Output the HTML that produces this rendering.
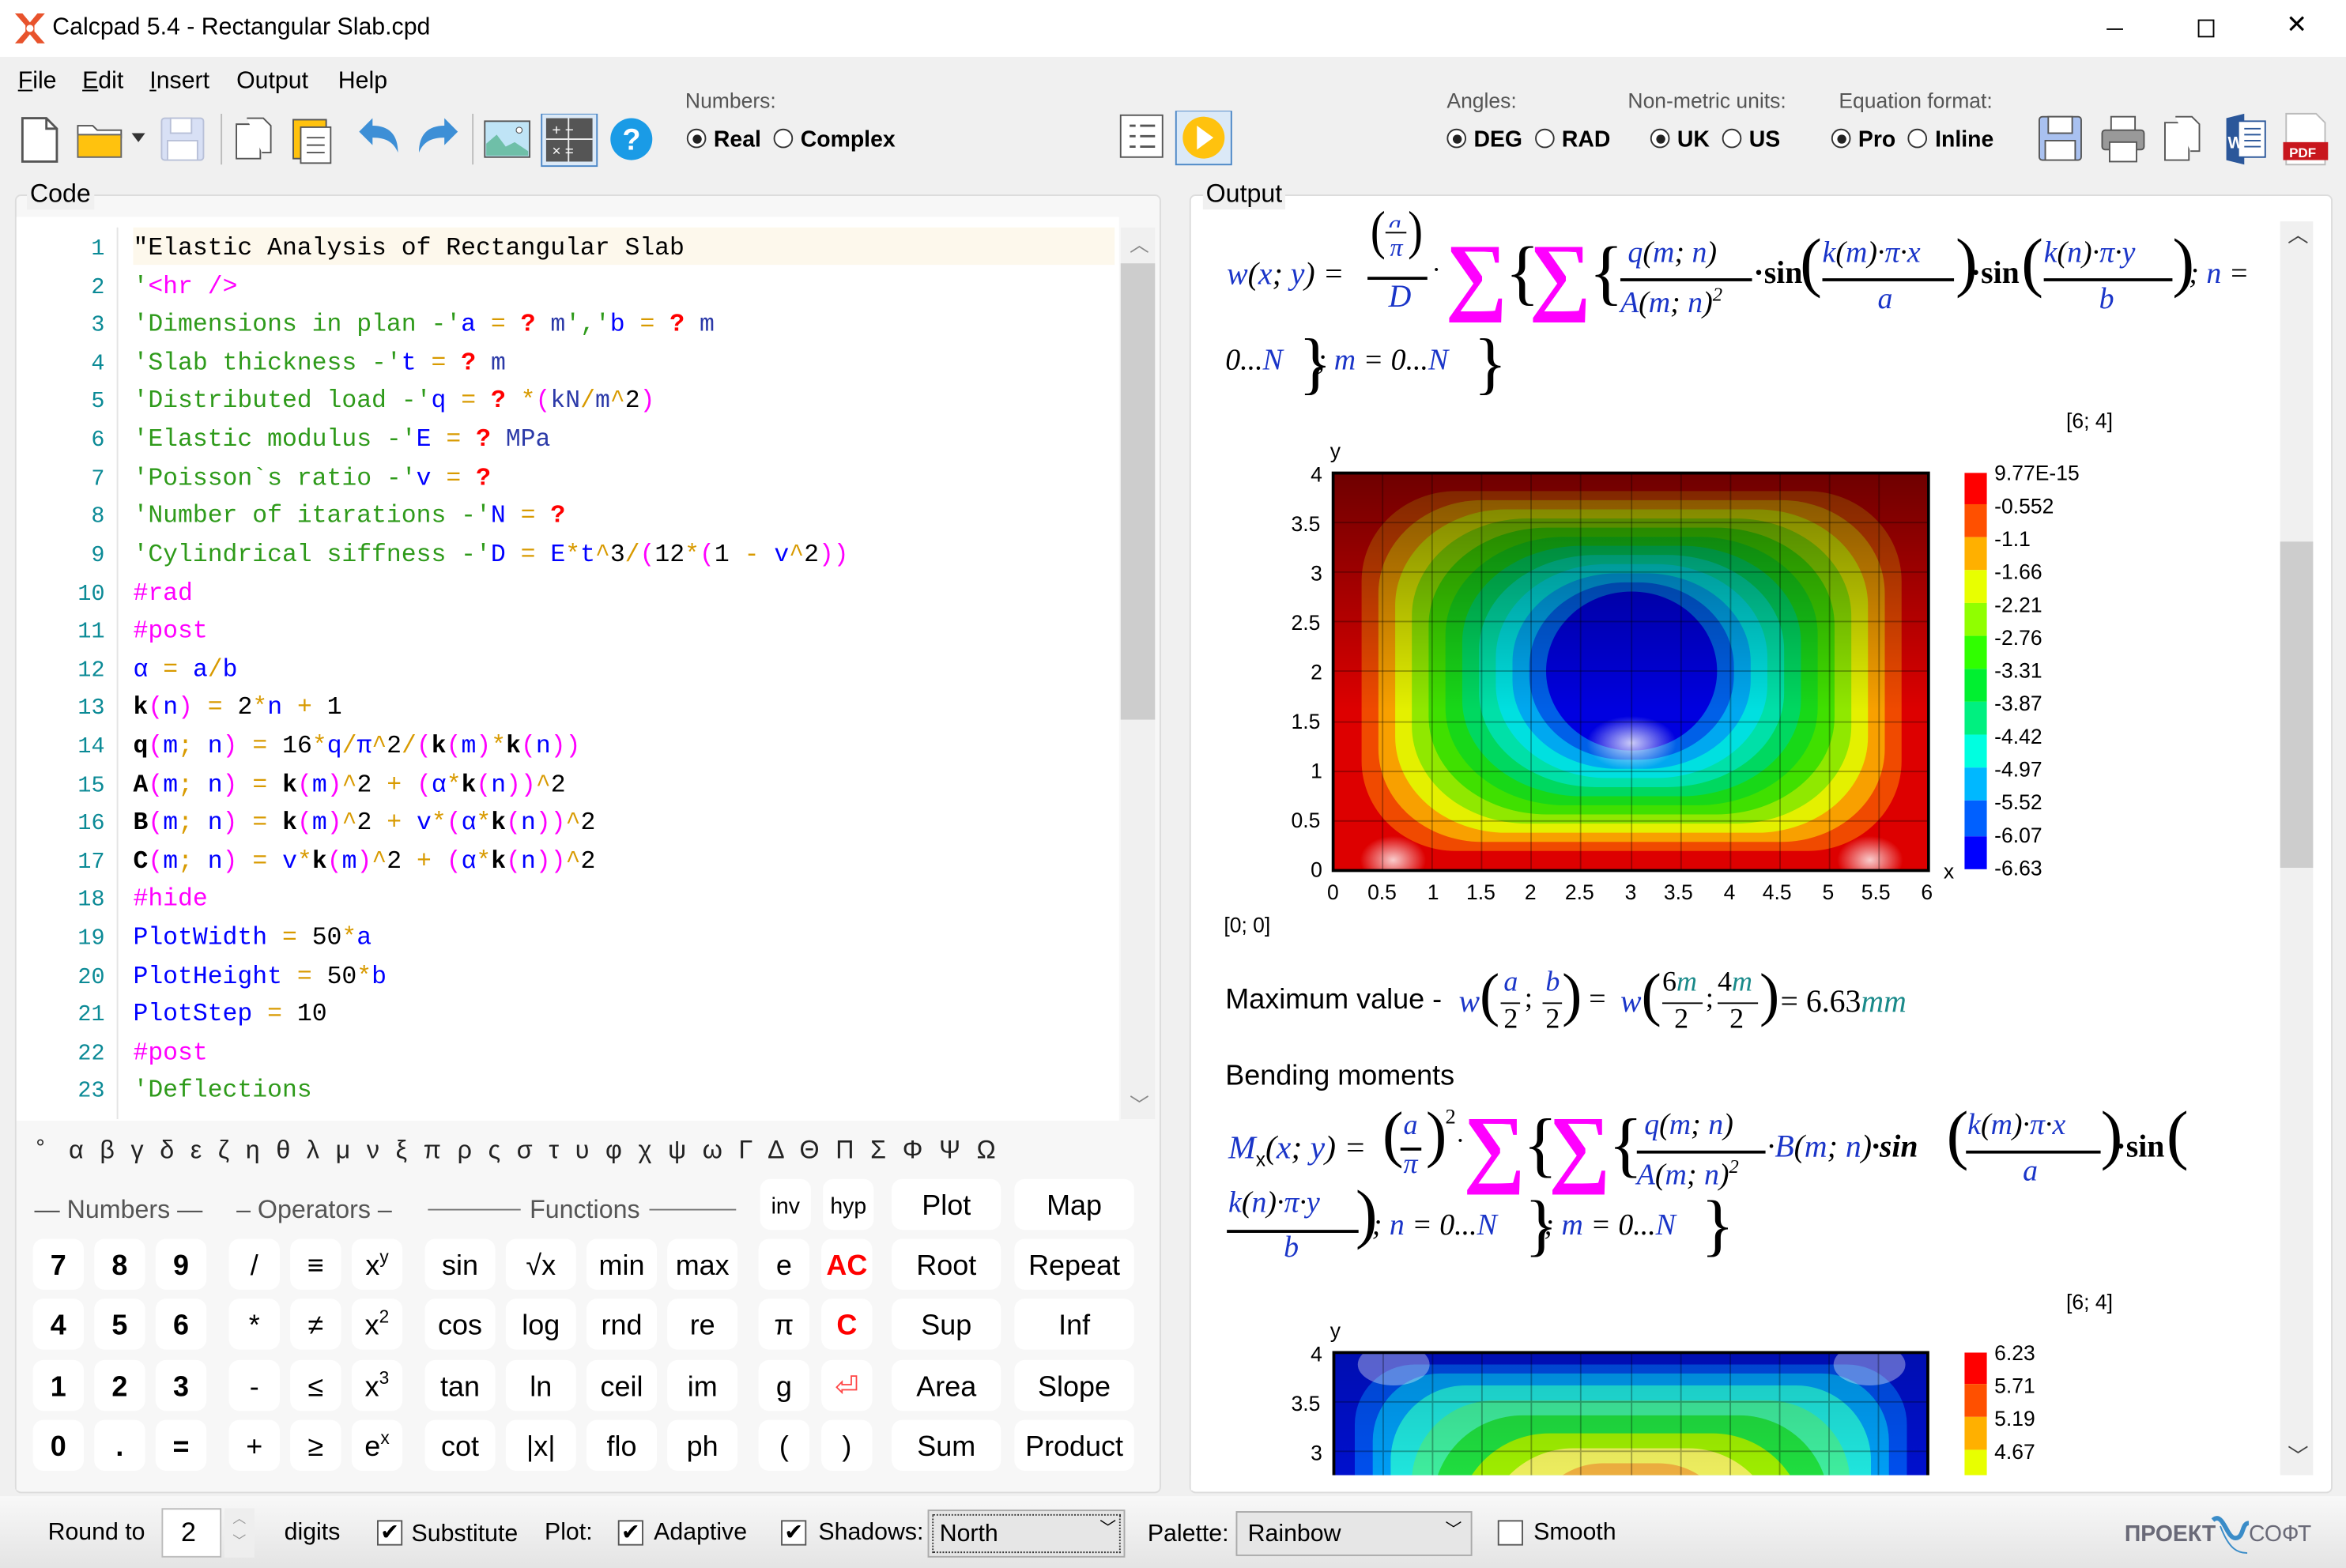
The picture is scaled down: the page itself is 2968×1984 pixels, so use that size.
<!DOCTYPE html>
<html><head><meta charset="utf-8">
<style>
html,body{margin:0;padding:0;width:2968px;height:1984px;overflow:hidden;background:#f0f0f0}
#w{position:absolute;left:0;top:0;width:1568px;height:1048px;transform:scale(1.89286,1.89313);transform-origin:0 0;background:#f0f0f0;font-family:"Liberation Sans",sans-serif;color:#000;overflow:hidden}
.a{position:absolute;white-space:nowrap}
.ui{font-size:16px}
.sm{font-size:14px;color:#555}
.rad{display:inline-block;width:11px;height:11px;border:1px solid #333;border-radius:50%;background:#fff;vertical-align:-1px;margin-right:5px;position:relative}
.rad.on::after{content:"";position:absolute;left:2.5px;top:2.5px;width:6px;height:6px;border-radius:50%;background:#222}
.bold{font-weight:bold;font-size:15px}
.panel{position:absolute;background:#fff;border:1px solid #dcdcdc;border-radius:4px}
.code{font-family:"Liberation Mono",monospace;font-size:16.6px}
.ln{position:absolute;left:30px;width:40px;text-align:right;color:#0b8a96;font-family:"Liberation Mono",monospace;font-size:15px}
.cl{position:absolute;left:89px}
.g{color:#2e9a1a}.b{color:#0000ff}.o{color:#d89a00}.r{color:#ff0000;font-weight:bold}.p{color:#ff00ff}.k{color:#000}.u{color:#2c3aa8}
.btn{position:absolute;background:#fff;border-radius:7px;text-align:center;font-size:19px;line-height:37px;height:34px}
.sp{position:relative;top:-8px;font-size:12px;line-height:0}
.v{font-family:"Liberation Serif",serif;font-style:italic;color:#1a35c8}
.n{font-family:"Liberation Serif",serif;color:#000}
.chk{position:absolute;width:15px;height:15px;border:1px solid #555;background:#fff;font-size:15px;line-height:15px;text-align:center}
.tk{position:absolute;font-size:14px;color:#000}
</style></head><body><div id="w">

<div class="a" style="left:0;top:0;width:1568px;height:38px;background:#fff"></div>
<svg class="a" style="left:9px;top:8px" width="22" height="22" viewBox="0 0 22 22"><path d="M1 1 L8 9 L8 13 L1 21 L6 21 L11 15 L16 21 L21 21 L14 13 L14 9 L21 1 L16 1 L11 7 L6 1Z" fill="#e8532c"/><circle cx="11" cy="11" r="2.4" fill="#fff"/></svg>
<div class="a ui" style="left:35px;top:10px">Calcpad 5.4 - Rectangular Slab.cpd</div>
<div class="a" style="left:1408px;top:19px;width:11px;height:1px;background:#000"></div>
<div class="a" style="left:1469px;top:13px;width:9px;height:10px;border:1px solid #000"></div>
<div class="a" style="left:1528px;top:7px;font-size:17px">✕</div>

<div class="a ui" style="left:12px;top:46px"><u>F</u>ile</div>
<div class="a ui" style="left:55px;top:46px"><u>E</u>dit</div>
<div class="a ui" style="left:100px;top:46px"><u>I</u>nsert</div>
<div class="a ui" style="left:158px;top:46px">Output</div>
<div class="a ui" style="left:226px;top:46px">Help</div>

<svg class="a" style="left:12px;top:76px" width="440" height="36" viewBox="0 0 440 36">
 <path d="M3 3h16l7 7v22H3z" fill="#fff" stroke="#555" stroke-width="1.5"/><path d="M19 3v7h7" fill="none" stroke="#555" stroke-width="1.5"/>
 <path d="M40 8h10l3 3h16v5H40z" fill="#fff" stroke="#555"/><path d="M40 14h29v15H40z" fill="#ffc20e" stroke="#666"/>
 <path d="M76 13h9l-4.5 6z" fill="#333"/>
 <rect x="96" y="3" width="28" height="28" rx="2" fill="#d8e0f5" stroke="#b8c0d8"/><rect x="102" y="3" width="14" height="10" fill="#fff" stroke="#b8c0d8"/><rect x="100" y="18" width="20" height="13" fill="#fff" stroke="#b8c0d8"/>
 <line x1="136" y1="0" x2="136" y2="34" stroke="#bbb"/>
 <path d="M146 7h11l5 5v18h-16z" fill="#fff" stroke="#555"/><path d="M153 3h11l5 5v18h-6" fill="#fff" stroke="#555"/>
 <rect x="184" y="4" width="22" height="26" fill="#ffc20e" stroke="#555"/><rect x="189" y="9" width="20" height="24" fill="#fff" stroke="#555"/><path d="M193 16h12M193 21h12M193 26h12" stroke="#555"/>
 <path d="M228 12 L237 3 L237 8 C248 8 254 14 254 26 C251 19 246 16 237 16 L237 21Z" fill="#3d8fd6"/>
 <path d="M294 12 L285 3 L285 8 C274 8 268 14 268 26 C271 19 276 16 285 16 L285 21Z" fill="#3d8fd6"/>
 <line x1="304" y1="0" x2="304" y2="34" stroke="#bbb"/>
 <rect x="312" y="5" width="30" height="24" fill="#bfe4f6" stroke="#555"/><path d="M313 28 L313 20 L320 14 L326 22 L332 19 L341 25 L341 28Z" fill="#6fbfa8"/><circle cx="335" cy="11" r="2" fill="#fff" stroke="#555" stroke-width=".6"/>
 <rect x="350" y="0" width="37" height="35" fill="#dbe9f7" stroke="#4a86c6"/><rect x="353" y="3" width="31" height="29" fill="#555"/><path d="M368 3v29M353 17h31" stroke="#eee"/><text x="357" y="14" fill="#fff" font-size="10">+ −</text><text x="357" y="28" fill="#fff" font-size="10">× =</text>
 <circle cx="410" cy="17" r="14" fill="#1a9be6"/><text x="404" y="24" fill="#fff" font-size="20" font-weight="bold" font-family="Liberation Sans">?</text>
</svg>
<div class="a sm" style="left:458px;top:59px">Numbers:</div>
<div class="a bold" style="left:459px;top:85px"><span class="rad on"></span>Real&nbsp;&nbsp;<span class="rad"></span>Complex</div>
<svg class="a" style="left:747px;top:74px" width="80" height="38" viewBox="0 0 80 38">
 <rect x="2" y="3" width="28" height="28" fill="#fff" stroke="#555"/><path d="M8 10h4M15 10h10M8 17h4M15 17h10M8 24h4M15 24h10" stroke="#555" stroke-width="1.5"/>
 <rect x="39" y="0" width="37" height="36" fill="#dbe9f7" stroke="#4a86c6"/><circle cx="57.5" cy="18" r="14" fill="#ffc20e"/><path d="M53 10 L64 18 L53 26Z" fill="#fff"/>
</svg>
<div class="a sm" style="left:967px;top:59px">Angles:</div>
<div class="a bold" style="left:967px;top:85px"><span class="rad on"></span>DEG&nbsp;&nbsp;<span class="rad"></span>RAD</div>
<div class="a sm" style="left:1088px;top:59px">Non-metric units:</div>
<div class="a bold" style="left:1103px;top:85px"><span class="rad on"></span>UK&nbsp;&nbsp;<span class="rad"></span>US</div>
<div class="a sm" style="left:1229px;top:59px">Equation format:</div>
<div class="a bold" style="left:1224px;top:85px"><span class="rad on"></span>Pro&nbsp;&nbsp;<span class="rad"></span>Inline</div>
<svg class="a" style="left:1360px;top:75px" width="200" height="36" viewBox="0 0 200 36">
 <rect x="3" y="3" width="28" height="29" rx="2" fill="#a9c1f0" stroke="#555"/><rect x="9" y="3" width="16" height="11" fill="#fff" stroke="#555"/><rect x="7" y="19" width="20" height="13" fill="#fff" stroke="#555"/>
 <rect x="51" y="3" width="16" height="10" fill="#fff" stroke="#555"/><rect x="45" y="12" width="28" height="13" rx="2" fill="#999" stroke="#555"/><rect x="50" y="20" width="18" height="13" fill="#fff" stroke="#555"/>
 <path d="M87 7h11l5 5v20h-16z" fill="#fff" stroke="#555"/><path d="M94 3h11l5 5v18h-6" fill="#fff" stroke="#555"/>
 <path d="M128 4 L140 1 L140 35 L128 32Z" fill="#2b579a"/><rect x="136" y="6" width="18" height="24" fill="#fff" stroke="#2b579a"/><path d="M140 11h11M140 15h11M140 19h11M140 23h11" stroke="#2b579a"/><text x="129" y="24" fill="#fff" font-size="11" font-weight="bold">W</text>
 <path d="M168 1h20l6 6v28h-26z" fill="#fff" stroke="#bbb"/><rect x="166" y="20" width="30" height="12" fill="#c8161d"/><text x="170" y="30" fill="#fff" font-size="9" font-weight="bold">PDF</text>
</svg>

<div class="panel" style="left:10px;top:130px;width:764px;height:866px;background:#f7f7f7"></div>
<div class="a" style="left:18px;top:120px;font-size:17px;background:#f0f0f0;padding:0 2px">Code</div>
<div class="a" style="left:11px;top:145px;width:737px;height:604px;background:#fff"></div>
<div class="a" style="left:78px;top:152px;width:1px;height:596px;background:#e4e4e4"></div>
<div class="a" style="left:89px;top:152px;width:656px;height:25px;background:#fdf8ec"></div>
<div class="a" style="left:749px;top:152px;width:23px;height:596px;background:#f0f0f0"></div>
<div class="a" style="left:749px;top:176px;width:23px;height:305px;background:#cdcdcd"></div>
<div class="a" style="left:755px;top:153px;font-size:13px;color:#888">︿</div>
<div class="a" style="left:755px;top:728px;font-size:13px;color:#888">﹀</div>

<div style="position:absolute;left:0;top:3px;width:760px;height:600px">
<div class="ln" style="top:155px">1</div><div class="cl code" style="top:153px">"Elastic Analysis of Rectangular Slab</div>
<div class="ln" style="top:181px">2</div><div class="cl code g" style="top:179px">'<span class="p">&lt;hr /&gt;</span></div>
<div class="ln" style="top:206px">3</div><div class="cl code g" style="top:204px">'Dimensions in plan -'<span class="b">a</span> <span class="o">=</span> <span class="r">?</span> <span class="u">m</span>','<span class="b">b</span> <span class="o">=</span> <span class="r">?</span> <span class="u">m</span></div>
<div class="ln" style="top:232px">4</div><div class="cl code g" style="top:230px">'Slab thickness -'<span class="b">t</span> <span class="o">=</span> <span class="r">?</span> <span class="u">m</span></div>
<div class="ln" style="top:257px">5</div><div class="cl code g" style="top:255px">'Distributed load -'<span class="b">q</span> <span class="o">=</span> <span class="r">?</span> <span class="o">*</span><span class="p">(</span><span class="u">kN</span><span class="o">/</span><span class="u">m</span><span class="o">^</span><span class="k">2</span><span class="p">)</span></div>
<div class="ln" style="top:283px">6</div><div class="cl code g" style="top:281px">'Elastic modulus -'<span class="b">E</span> <span class="o">=</span> <span class="r">?</span> <span class="u">MPa</span></div>
<div class="ln" style="top:309px">7</div><div class="cl code g" style="top:307px">'Poisson`s ratio -'<span class="b">v</span> <span class="o">=</span> <span class="r">?</span></div>
<div class="ln" style="top:334px">8</div><div class="cl code g" style="top:332px">'Number of itarations -'<span class="b">N</span> <span class="o">=</span> <span class="r">?</span></div>
<div class="ln" style="top:360px">9</div><div class="cl code g" style="top:358px">'Cylindrical siffness -'<span class="b">D</span> <span class="o">=</span> <span class="b">E</span><span class="o">*</span><span class="b">t</span><span class="o">^</span><span class="k">3</span><span class="o">/</span><span class="p">(</span><span class="k">12</span><span class="o">*</span><span class="p">(</span><span class="k">1</span> <span class="o">-</span> <span class="b">v</span><span class="o">^</span><span class="k">2</span><span class="p">))</span></div>
<div class="ln" style="top:386px">10</div><div class="cl code p" style="top:384px">#rad</div>
<div class="ln" style="top:411px">11</div><div class="cl code p" style="top:409px">#post</div>
<div class="ln" style="top:437px">12</div><div class="cl code" style="top:435px"><span class="b">α</span> <span class="o">=</span> <span class="b">a</span><span class="o">/</span><span class="b">b</span></div>
<div class="ln" style="top:462px">13</div><div class="cl code" style="top:460px"><b>k</b><span class="p">(</span><span class="b">n</span><span class="p">)</span> <span class="o">=</span> 2<span class="o">*</span><span class="b">n</span> <span class="o">+</span> 1</div>
<div class="ln" style="top:488px">14</div><div class="cl code" style="top:486px"><b>q</b><span class="p">(</span><span class="b">m</span><span class="o">;</span> <span class="b">n</span><span class="p">)</span> <span class="o">=</span> 16<span class="o">*</span><span class="b">q</span><span class="o">/</span><span class="b">π</span><span class="o">^</span>2<span class="o">/</span><span class="p">(</span><b>k</b><span class="p">(</span><span class="b">m</span><span class="p">)</span><span class="o">*</span><b>k</b><span class="p">(</span><span class="b">n</span><span class="p">))</span></div>
<div class="ln" style="top:514px">15</div><div class="cl code" style="top:512px"><b>A</b><span class="p">(</span><span class="b">m</span><span class="o">;</span> <span class="b">n</span><span class="p">)</span> <span class="o">=</span> <b>k</b><span class="p">(</span><span class="b">m</span><span class="p">)</span><span class="o">^</span>2 <span class="o">+</span> <span class="p">(</span><span class="b">α</span><span class="o">*</span><b>k</b><span class="p">(</span><span class="b">n</span><span class="p">))</span><span class="o">^</span>2</div>
<div class="ln" style="top:539px">16</div><div class="cl code" style="top:537px"><b>B</b><span class="p">(</span><span class="b">m</span><span class="o">;</span> <span class="b">n</span><span class="p">)</span> <span class="o">=</span> <b>k</b><span class="p">(</span><span class="b">m</span><span class="p">)</span><span class="o">^</span>2 <span class="o">+</span> <span class="b">v</span><span class="o">*</span><span class="p">(</span><span class="b">α</span><span class="o">*</span><b>k</b><span class="p">(</span><span class="b">n</span><span class="p">))</span><span class="o">^</span>2</div>
<div class="ln" style="top:565px">17</div><div class="cl code" style="top:563px"><b>C</b><span class="p">(</span><span class="b">m</span><span class="o">;</span> <span class="b">n</span><span class="p">)</span> <span class="o">=</span> <span class="b">v</span><span class="o">*</span><b>k</b><span class="p">(</span><span class="b">m</span><span class="p">)</span><span class="o">^</span>2 <span class="o">+</span> <span class="p">(</span><span class="b">α</span><span class="o">*</span><b>k</b><span class="p">(</span><span class="b">n</span><span class="p">))</span><span class="o">^</span>2</div>
<div class="ln" style="top:590px">18</div><div class="cl code p" style="top:588px">#hide</div>
<div class="ln" style="top:616px">19</div><div class="cl code" style="top:614px"><span class="b">PlotWidth</span> <span class="o">=</span> 50<span class="o">*</span><span class="b">a</span></div>
<div class="ln" style="top:642px">20</div><div class="cl code" style="top:640px"><span class="b">PlotHeight</span> <span class="o">=</span> 50<span class="o">*</span><span class="b">b</span></div>
<div class="ln" style="top:667px">21</div><div class="cl code" style="top:665px"><span class="b">PlotStep</span> <span class="o">=</span> 10</div>
<div class="ln" style="top:693px">22</div><div class="cl code p" style="top:691px">#post</div>
<div class="ln" style="top:718px">23</div><div class="cl code g" style="top:716px">'Deflections</div>
</div>
<div class="a" style="left:11px;top:749px;width:762px;height:247px;background:#f7f7f7"></div>

<div class="a" style="left:24px;top:759px;font-size:15px;color:#222">°</div>
<div class="a" style="left:46px;top:759px;font-size:17px;color:#222;word-spacing:6.2px">α β γ δ ε ζ η θ λ μ ν ξ π ρ ς σ τ υ φ χ ψ ω Γ Δ Θ Π Σ Φ Ψ Ω</div>

<div class="a" style="left:23px;top:799px;font-size:17px;color:#555">— Numbers —</div>
<div class="a" style="left:158px;top:799px;font-size:17px;color:#555">– Operators –</div>
<div class="a" style="left:286px;top:808px;width:62px;height:1px;background:#777"></div>
<div class="a" style="left:354px;top:799px;font-size:17px;color:#555">Functions</div>
<div class="a" style="left:434px;top:808px;width:58px;height:1px;background:#777"></div>

<div class="btn" style="left:508px;top:788px;width:34px;font-size:15px">inv</div>
<div class="btn" style="left:550px;top:788px;width:34px;font-size:15px">hyp</div>
<div class="btn" style="left:596px;top:788px;width:73px">Plot</div>
<div class="btn" style="left:678px;top:788px;width:80px">Map</div>

<div class="btn" style="left:22px;top:828px;width:34px;font-weight:bold">7</div>
<div class="btn" style="left:63px;top:828px;width:34px;font-weight:bold">8</div>
<div class="btn" style="left:104px;top:828px;width:34px;font-weight:bold">9</div>
<div class="btn" style="left:153px;top:828px;width:34px">/</div>
<div class="btn" style="left:194px;top:828px;width:34px">≡</div>
<div class="btn" style="left:235px;top:828px;width:34px">x<span class="sp">y</span></div>
<div class="btn" style="left:284px;top:828px;width:47px">sin</div>
<div class="btn" style="left:338px;top:828px;width:47px">√x</div>
<div class="btn" style="left:392px;top:828px;width:47px">min</div>
<div class="btn" style="left:446px;top:828px;width:47px">max</div>
<div class="btn" style="left:507px;top:828px;width:34px">e</div>
<div class="btn" style="left:549px;top:828px;width:34px;color:#f00;font-weight:bold">AC</div>
<div class="btn" style="left:596px;top:828px;width:73px">Root</div>
<div class="btn" style="left:678px;top:828px;width:80px">Repeat</div>

<div class="btn" style="left:22px;top:868px;width:34px;font-weight:bold">4</div>
<div class="btn" style="left:63px;top:868px;width:34px;font-weight:bold">5</div>
<div class="btn" style="left:104px;top:868px;width:34px;font-weight:bold">6</div>
<div class="btn" style="left:153px;top:868px;width:34px">*</div>
<div class="btn" style="left:194px;top:868px;width:34px">≠</div>
<div class="btn" style="left:235px;top:868px;width:34px">x<span class="sp">2</span></div>
<div class="btn" style="left:284px;top:868px;width:47px">cos</div>
<div class="btn" style="left:338px;top:868px;width:47px">log</div>
<div class="btn" style="left:392px;top:868px;width:47px">rnd</div>
<div class="btn" style="left:446px;top:868px;width:47px">re</div>
<div class="btn" style="left:507px;top:868px;width:34px">π</div>
<div class="btn" style="left:549px;top:868px;width:34px;color:#f00;font-weight:bold">C</div>
<div class="btn" style="left:596px;top:868px;width:73px">Sup</div>
<div class="btn" style="left:678px;top:868px;width:80px">Inf</div>

<div class="btn" style="left:22px;top:909px;width:34px;font-weight:bold">1</div>
<div class="btn" style="left:63px;top:909px;width:34px;font-weight:bold">2</div>
<div class="btn" style="left:104px;top:909px;width:34px;font-weight:bold">3</div>
<div class="btn" style="left:153px;top:909px;width:34px">-</div>
<div class="btn" style="left:194px;top:909px;width:34px">≤</div>
<div class="btn" style="left:235px;top:909px;width:34px">x<span class="sp">3</span></div>
<div class="btn" style="left:284px;top:909px;width:47px">tan</div>
<div class="btn" style="left:338px;top:909px;width:47px">ln</div>
<div class="btn" style="left:392px;top:909px;width:47px">ceil</div>
<div class="btn" style="left:446px;top:909px;width:47px">im</div>
<div class="btn" style="left:507px;top:909px;width:34px">g</div>
<div class="btn" style="left:549px;top:909px;width:34px;color:#f44">⏎</div>
<div class="btn" style="left:596px;top:909px;width:73px">Area</div>
<div class="btn" style="left:678px;top:909px;width:80px">Slope</div>

<div class="btn" style="left:22px;top:949px;width:34px;font-weight:bold">0</div>
<div class="btn" style="left:63px;top:949px;width:34px;font-weight:bold">.</div>
<div class="btn" style="left:104px;top:949px;width:34px;font-weight:bold">=</div>
<div class="btn" style="left:153px;top:949px;width:34px">+</div>
<div class="btn" style="left:194px;top:949px;width:34px">≥</div>
<div class="btn" style="left:235px;top:949px;width:34px">e<span class="sp">x</span></div>
<div class="btn" style="left:284px;top:949px;width:47px">cot</div>
<div class="btn" style="left:338px;top:949px;width:47px">|x|</div>
<div class="btn" style="left:392px;top:949px;width:47px">flo</div>
<div class="btn" style="left:446px;top:949px;width:47px">ph</div>
<div class="btn" style="left:507px;top:949px;width:34px">(</div>
<div class="btn" style="left:549px;top:949px;width:34px">)</div>
<div class="btn" style="left:596px;top:949px;width:73px">Sum</div>
<div class="btn" style="left:678px;top:949px;width:80px">Product</div>

<div class="panel" style="left:795px;top:130px;width:762px;height:866px"></div>
<div class="a" style="left:804px;top:120px;font-size:17px;background:#f0f0f0;padding:0 2px">Output</div>
<div class="a" style="left:1524px;top:148px;width:22px;height:838px;background:#f0f0f0"></div>
<div class="a" style="left:1524px;top:362px;width:22px;height:218px;background:#cdcdcd"></div>
<div class="a" style="left:1529px;top:147px;font-size:14px;color:#444">︿</div>
<div class="a" style="left:1529px;top:963px;font-size:14px;color:#444">﹀</div>

<div class="a v" style="left:820px;top:171px;font-size:21px">w<span class="n">(</span>x<span class="n">; </span>y<span class="n">) =</span></div>
<div class="a n" style="left:916px;top:138px;font-size:30px;transform:scaleY(1.2)">(</div>
<div class="a v" style="left:928px;top:140px;font-size:17px;height:12px;overflow:hidden">a</div>
<div class="a" style="left:926px;top:155px;width:14px;height:1px;background:#000"></div>
<div class="a v" style="left:929px;top:156px;font-size:17px">π</div>
<div class="a n" style="left:941px;top:138px;font-size:30px;transform:scaleY(1.2)">)</div>
<div class="a" style="left:914px;top:185px;width:40px;height:1.5px;background:#000"></div>
<div class="a v" style="left:928px;top:186px;font-size:21px">D</div>
<div class="a n" style="left:957px;top:170px;font-size:18px">·</div>
<div class="a n" style="left:966px;top:150px;font-size:58px;color:#ff00ff;font-weight:bold">∑</div>
<div class="a n" style="left:1006px;top:155px;font-size:48px;font-weight:100">{</div>
<div class="a n" style="left:1022px;top:150px;font-size:58px;color:#ff00ff;font-weight:bold">∑</div>
<div class="a n" style="left:1062px;top:155px;font-size:48px">{</div>
<div class="a v" style="left:1088px;top:158px;font-size:20px">q<span class="n">(</span>m<span class="n">; </span>n<span class="n">)</span></div>
<div class="a" style="left:1083px;top:186px;width:88px;height:1.5px;background:#000"></div>
<div class="a v" style="left:1083px;top:189px;font-size:20px">A<span class="n">(</span>m<span class="n">; </span>n<span class="n">)</span><sup class="n" style="font-size:13px">2</sup></div>
<div class="a n" style="left:1172px;top:170px;font-size:21px"><b>·sin</b></div>
<div class="a n" style="left:1203px;top:150px;font-size:44px;font-weight:100">(</div>
<div class="a v" style="left:1218px;top:158px;font-size:20px">k<span class="n">(</span>m<span class="n">)·</span>π<span class="n">·</span>x</div>
<div class="a" style="left:1218px;top:186px;width:88px;height:1.5px;background:#000"></div>
<div class="a v" style="left:1255px;top:189px;font-size:20px">a</div>
<div class="a n" style="left:1307px;top:150px;font-size:44px">)</div>
<div class="a n" style="left:1317px;top:170px;font-size:21px"><b>·sin</b></div>
<div class="a n" style="left:1351px;top:150px;font-size:44px">(</div>
<div class="a v" style="left:1366px;top:158px;font-size:20px">k<span class="n">(</span>n<span class="n">)·</span>π<span class="n">·</span>y</div>
<div class="a" style="left:1366px;top:186px;width:86px;height:1.5px;background:#000"></div>
<div class="a v" style="left:1403px;top:189px;font-size:20px">b</div>
<div class="a n" style="left:1452px;top:150px;font-size:44px">)</div>
<div class="a v" style="left:1463px;top:172px;font-size:20px"><span class="n">; </span>n <span class="n">=</span></div>
<div class="a v" style="left:819px;top:230px;font-size:20px"><span class="n">0...</span>N</div>
<div class="a n" style="left:868px;top:216px;font-size:46px">}</div>
<div class="a v" style="left:880px;top:230px;font-size:20px"><span class="n">; </span>m <span class="n">= 0...</span>N</div>
<div class="a n" style="left:985px;top:216px;font-size:46px">}</div>

<div class="a tk" style="left:1381px;top:273px">[6; 4]</div>

<div class="a tk" style="left:889px;top:293px">y</div>
<div class="a tk" style="left:876px;top:309px">4</div>
<div class="a tk" style="left:863px;top:342px">3.5</div>
<div class="a tk" style="left:876px;top:375px">3</div>
<div class="a tk" style="left:863px;top:408px">2.5</div>
<div class="a tk" style="left:876px;top:441px">2</div>
<div class="a tk" style="left:863px;top:474px">1.5</div>
<div class="a tk" style="left:876px;top:507px">1</div>
<div class="a tk" style="left:863px;top:540px">0.5</div>
<div class="a tk" style="left:876px;top:573px">0</div>
<div class="a tk" style="left:1299px;top:574px">x</div>
<div class="a tk" style="left:887px;top:588px">0</div>
<div class="a tk" style="left:914px;top:588px">0.5</div>
<div class="a tk" style="left:954px;top:588px">1</div>
<div class="a tk" style="left:980px;top:588px">1.5</div>
<div class="a tk" style="left:1019px;top:588px">2</div>
<div class="a tk" style="left:1046px;top:588px">2.5</div>
<div class="a tk" style="left:1086px;top:588px">3</div>
<div class="a tk" style="left:1112px;top:588px">3.5</div>
<div class="a tk" style="left:1152px;top:588px">4</div>
<div class="a tk" style="left:1178px;top:588px">4.5</div>
<div class="a tk" style="left:1218px;top:588px">5</div>
<div class="a tk" style="left:1244px;top:588px">5.5</div>
<div class="a tk" style="left:1284px;top:588px">6</div>
<div class="a tk" style="left:818px;top:610px">[0; 0]</div>

<svg class="a" style="left:890px;top:315px" width="400" height="268" viewBox="-1 -1 399 267">
<defs>
<linearGradient id="sh" x1="0" y1="0" x2="0" y2="1"><stop offset="0" stop-color="#000" stop-opacity=".5"/><stop offset=".6" stop-color="#000" stop-opacity="0"/></linearGradient>
<radialGradient id="gl"><stop offset="0" stop-color="#fff" stop-opacity=".8"/><stop offset="1" stop-color="#fff" stop-opacity="0"/></radialGradient>
</defs>
<rect x="0" y="0" width="397" height="265" fill="#dd0000"/>
<rect x="19" y="12" width="360" height="240" rx="63" ry="60" fill="#f04a00"/>
<rect x="30.2" y="18.1" width="337.6" height="227.8" rx="69" ry="62" fill="#f8a000"/>
<rect x="41.4" y="24.2" width="315.2" height="215.6" rx="74" ry="64" fill="#e4f000"/>
<rect x="52.5" y="30.3" width="293" height="203.4" rx="77" ry="65" fill="#90e800"/>
<rect x="63.7" y="36.4" width="270.6" height="191.2" rx="79" ry="65" fill="#40e000"/>
<rect x="74.9" y="42.5" width="248.2" height="179" rx="80" ry="65" fill="#18d818"/>
<rect x="86.1" y="48.5" width="225.8" height="167" rx="80" ry="64" fill="#00d860"/>
<rect x="97.3" y="54.6" width="203.4" height="154.8" rx="78" ry="63" fill="#00e0a8"/>
<rect x="108.5" y="60.7" width="181" height="142.6" rx="74" ry="62" fill="#00e0e0"/>
<rect x="119.6" y="66.8" width="158.8" height="130.4" rx="70" ry="59" fill="#00a8f0"/>
<rect x="130.8" y="72.9" width="136.4" height="118.2" rx="64" ry="56" fill="#0060e8"/>
<rect x="142" y="79" width="114" height="106" rx="57" ry="53" fill="#0000e0"/>
<rect x="0" y="0" width="397" height="265" fill="url(#sh)"/>
<ellipse cx="199" cy="180" rx="30" ry="18" fill="url(#gl)"/>
<ellipse cx="40" cy="258" rx="22" ry="16" fill="url(#gl)"/>
<ellipse cx="358" cy="258" rx="22" ry="16" fill="url(#gl)"/>
<g stroke="#000" stroke-opacity=".3" stroke-width="1">
<path d="M33 0v265M66 0v265M99 0v265M132 0v265M165 0v265M199 0v265M232 0v265M265 0v265M298 0v265M331 0v265M364 0v265"/>
<path d="M0 33h397M0 66h397M0 99h397M0 132h397M0 166h397M0 199h397M0 232h397"/>
</g>
<rect x="0" y="0" width="397" height="265" fill="none" stroke="#000" stroke-width="2"/>
</svg>

<svg class="a" style="left:1313px;top:316px" width="15" height="265" viewBox="0 0 15 265">
<rect y="0" width="15" height="21" fill="#ff0000"/><rect y="21" width="15" height="22" fill="#ff5000"/><rect y="43" width="15" height="22" fill="#ffb000"/><rect y="65" width="15" height="22" fill="#e8ff00"/><rect y="87" width="15" height="22" fill="#90ff00"/><rect y="109" width="15" height="22" fill="#30ff00"/><rect y="131" width="15" height="22" fill="#00f030"/><rect y="153" width="15" height="22" fill="#00f080"/><rect y="175" width="15" height="22" fill="#00ffe0"/><rect y="197" width="15" height="22" fill="#00b8ff"/><rect y="219" width="15" height="24" fill="#0060ff"/><rect y="243" width="15" height="22" fill="#0000ff"/>
</svg>
<div class="a tk" style="left:1333px;top:305px;line-height:22px">9.77E-15<br>-0.552<br>-1.1<br>-1.66<br>-2.21<br>-2.76<br>-3.31<br>-3.87<br>-4.42<br>-4.97<br>-5.52<br>-6.07<br>-6.63</div>

<div class="a" style="left:819px;top:658px;font-size:19px">Maximum value -</div>
<div class="a v" style="left:975px;top:657px;font-size:21px">w</div>
<div class="a n" style="left:989px;top:641px;font-size:40px;font-weight:100">(</div>
<div class="a v" style="left:1005px;top:646px;font-size:19px">a</div><div class="a" style="left:1003px;top:670px;width:13px;height:1px;background:#000"></div><div class="a n" style="left:1005px;top:671px;font-size:19px">2</div>
<div class="a n" style="left:1019px;top:657px;font-size:19px">;</div>
<div class="a v" style="left:1033px;top:646px;font-size:19px">b</div><div class="a" style="left:1031px;top:670px;width:13px;height:1px;background:#000"></div><div class="a n" style="left:1033px;top:671px;font-size:19px">2</div>
<div class="a n" style="left:1044px;top:641px;font-size:40px">)</div>
<div class="a n" style="left:1062px;top:657px;font-size:20px">=</div>
<div class="a v" style="left:1083px;top:657px;font-size:21px">w</div>
<div class="a n" style="left:1097px;top:641px;font-size:40px">(</div>
<div class="a n" style="left:1111px;top:646px;font-size:19px">6<i style="color:#1a8a8a">m</i></div><div class="a" style="left:1111px;top:670px;width:27px;height:1px;background:#000"></div><div class="a n" style="left:1119px;top:671px;font-size:19px">2</div>
<div class="a n" style="left:1140px;top:657px;font-size:19px">;</div>
<div class="a n" style="left:1148px;top:646px;font-size:19px">4<i style="color:#1a8a8a">m</i></div><div class="a" style="left:1148px;top:670px;width:27px;height:1px;background:#000"></div><div class="a n" style="left:1156px;top:671px;font-size:19px">2</div>
<div class="a n" style="left:1176px;top:641px;font-size:40px">)</div>
<div class="a n" style="left:1190px;top:657px;font-size:21px">= 6.63<i style="color:#1a8a8a">mm</i></div>

<div class="a" style="left:819px;top:709px;font-size:19px">Bending moments</div>

<div class="a v" style="left:821px;top:754px;font-size:22px">M<sub class="n" style="font-size:13px;font-style:normal;font-family:'Liberation Sans'">x</sub><span class="n">(</span>x<span class="n">; </span>y<span class="n">) =</span></div>
<div class="a n" style="left:924px;top:735px;font-size:42px;font-weight:100">(</div>
<div class="a v" style="left:938px;top:742px;font-size:19px">a</div><div class="a" style="left:936px;top:767px;width:14px;height:1.5px;background:#000"></div><div class="a v" style="left:938px;top:768px;font-size:19px">π</div>
<div class="a n" style="left:953px;top:735px;font-size:42px">)</div>
<div class="a n" style="left:966px;top:740px;font-size:14px">2</div>
<div class="a n" style="left:973px;top:752px;font-size:18px">·</div>
<div class="a n" style="left:978px;top:733px;font-size:58px;color:#ff00ff;font-weight:bold">∑</div>
<div class="a n" style="left:1018px;top:738px;font-size:48px">{</div>
<div class="a n" style="left:1035px;top:733px;font-size:58px;color:#ff00ff;font-weight:bold">∑</div>
<div class="a n" style="left:1075px;top:738px;font-size:48px">{</div>
<div class="a v" style="left:1099px;top:741px;font-size:20px">q<span class="n">(</span>m<span class="n">; </span>n<span class="n">)</span></div>
<div class="a" style="left:1094px;top:769px;width:86px;height:1.5px;background:#000"></div>
<div class="a v" style="left:1094px;top:772px;font-size:20px">A<span class="n">(</span>m<span class="n">; </span>n<span class="n">)</span><sup class="n" style="font-size:13px">2</sup></div>
<div class="a v" style="left:1181px;top:754px;font-size:21px"><span class="n">·</span>B<span class="n">(</span>m<span class="n">; </span>n<span class="n">)</span><b class="n">·sin</b></div>
<div class="a n" style="left:1301px;top:733px;font-size:44px">(</div>
<div class="a v" style="left:1315px;top:741px;font-size:20px">k<span class="n">(</span>m<span class="n">)·</span>π<span class="n">·</span>x</div>
<div class="a" style="left:1314px;top:769px;width:90px;height:1.5px;background:#000"></div>
<div class="a v" style="left:1352px;top:772px;font-size:20px">a</div>
<div class="a n" style="left:1404px;top:733px;font-size:44px">)</div>
<div class="a n" style="left:1414px;top:754px;font-size:21px"><b>·sin</b></div>
<div class="a n" style="left:1448px;top:733px;font-size:44px">(</div>
<div class="a v" style="left:821px;top:793px;font-size:20px">k<span class="n">(</span>n<span class="n">)·</span>π<span class="n">·</span>y</div>
<div class="a" style="left:820px;top:822px;width:88px;height:1.5px;background:#000"></div>
<div class="a v" style="left:858px;top:823px;font-size:20px">b</div>
<div class="a n" style="left:906px;top:786px;font-size:44px">)</div>
<div class="a v" style="left:917px;top:808px;font-size:20px"><span class="n">; </span>n <span class="n">= 0...</span>N</div>
<div class="a n" style="left:1019px;top:792px;font-size:46px">}</div>
<div class="a v" style="left:1032px;top:808px;font-size:20px"><span class="n">; </span>m <span class="n">= 0...</span>N</div>
<div class="a n" style="left:1137px;top:792px;font-size:46px">}</div>

<div class="a tk" style="left:1381px;top:862px">[6; 4]</div>

<div class="a tk" style="left:889px;top:881px">y</div>
<div class="a tk" style="left:876px;top:897px">4</div>
<div class="a tk" style="left:863px;top:930px">3.5</div>
<div class="a tk" style="left:876px;top:963px">3</div>
<svg class="a" style="left:890px;top:903px" width="400" height="83" viewBox="-1 -1 399 83">
<defs><linearGradient id="sh2" x1="0" y1="0" x2="0" y2="1"><stop offset="0" stop-color="#000" stop-opacity=".15"/><stop offset="1" stop-color="#000" stop-opacity="0"/></linearGradient></defs>
<rect x="0" y="0" width="397" height="90" fill="#0010d0"/>
<rect x="14" y="8" width="369" height="240" rx="40" ry="40" fill="#0050f0"/>
<rect x="26" y="14" width="345" height="230" rx="45" ry="45" fill="#00a0f8"/>
<rect x="38" y="22" width="321" height="220" rx="50" ry="50" fill="#20e8e0"/>
<rect x="52" y="32" width="293" height="210" rx="55" ry="55" fill="#40f0a0"/>
<rect x="66" y="42" width="265" height="200" rx="60" ry="60" fill="#20e040"/>
<rect x="82" y="54" width="233" height="190" rx="62" ry="62" fill="#a0f000"/>
<rect x="100" y="64" width="197" height="180" rx="60" ry="60" fill="#f0f060"/>
<rect x="130" y="74" width="137" height="170" rx="50" ry="50" fill="#f0b040"/>
<rect x="0" y="0" width="397" height="90" fill="url(#sh2)"/>
<ellipse cx="40" cy="8" rx="24" ry="14" fill="#fff" fill-opacity=".35"/>
<ellipse cx="358" cy="8" rx="24" ry="14" fill="#fff" fill-opacity=".35"/>
<g stroke="#000" stroke-opacity=".3"><path d="M33 0v90M66 0v90M99 0v90M132 0v90M165 0v90M199 0v90M232 0v90M265 0v90M298 0v90M331 0v90M364 0v90M0 33h397M0 66h397"/></g>
<path d="M0 90V0h397v90" fill="none" stroke="#000" stroke-width="2"/>
</svg>
<svg class="a" style="left:1313px;top:904px" width="15" height="82"><rect y="0" width="15" height="21" fill="#ff0000"/><rect y="21" width="15" height="22" fill="#ff5000"/><rect y="43" width="15" height="22" fill="#ffb000"/><rect y="65" width="15" height="22" fill="#e8ff00"/></svg>
<div class="a tk" style="left:1333px;top:893px;line-height:22px">6.23<br>5.71<br>5.19<br>4.67</div>
<div class="a" style="left:796px;top:986px;width:760px;height:10px;background:#fff"></div>

<div class="a" style="left:0;top:1000px;width:1568px;height:48px;background:linear-gradient(#f8f8f8,#e4e4e4)"></div>
<div class="a ui" style="left:32px;top:1016px">Round to</div>
<div class="a" style="left:108px;top:1008px;width:38px;height:31px;background:#fff;border:1px solid #bbb"></div>
<div class="a" style="left:121px;top:1014px;font-size:18px">2</div>
<div class="a" style="left:150px;top:1008px;width:20px;height:33px;background:#eee;font-size:9px;color:#999;text-align:center;line-height:15px">︿<br>﹀</div>
<div class="a ui" style="left:190px;top:1016px">digits</div>
<div class="chk" style="left:252px;top:1016px">✔</div><div class="a ui" style="left:275px;top:1017px">Substitute</div>
<div class="a ui" style="left:364px;top:1016px">Plot:</div>
<div class="chk" style="left:413px;top:1016px">✔</div><div class="a ui" style="left:437px;top:1016px">Adaptive</div>
<div class="chk" style="left:522px;top:1016px">✔</div><div class="a ui" style="left:547px;top:1016px">Shadows:</div>
<div class="a" style="left:620px;top:1009px;width:130px;height:30px;background:#e6e6e6;border:1px solid #aaa"></div>
<div class="a" style="left:623px;top:1012px;width:124px;height:24px;border:1px dotted #333"></div>
<div class="a ui" style="left:628px;top:1017px">North</div>
<div class="a" style="left:735px;top:1013px;font-size:11px">﹀</div>
<div class="a ui" style="left:767px;top:1017px">Palette:</div>
<div class="a" style="left:826px;top:1010px;width:156px;height:28px;background:#e6e6e6;border:1px solid #aaa"></div>
<div class="a ui" style="left:834px;top:1017px">Rainbow</div>
<div class="a" style="left:966px;top:1014px;font-size:11px">﹀</div>
<div class="chk" style="left:1001px;top:1016px"></div><div class="a ui" style="left:1025px;top:1016px">Smooth</div>
<div class="a" style="left:1420px;top:1017px;font-size:15px;font-weight:bold;color:#6a6a78">ПРОЕКТ</div>
<svg class="a" style="left:1476px;top:1010px" width="30" height="30"><path d="M3 6 C10 0 12 18 18 18 C24 18 22 8 27 8" fill="none" stroke="#3a8cc8" stroke-width="3"/><path d="M8 10 C14 26 20 28 26 28" fill="none" stroke="#3a8cc8" stroke-width="1"/></svg>
<div class="a" style="left:1503px;top:1017px;font-size:15px;color:#6a6a78">СОФТ</div>
</div></body></html>
